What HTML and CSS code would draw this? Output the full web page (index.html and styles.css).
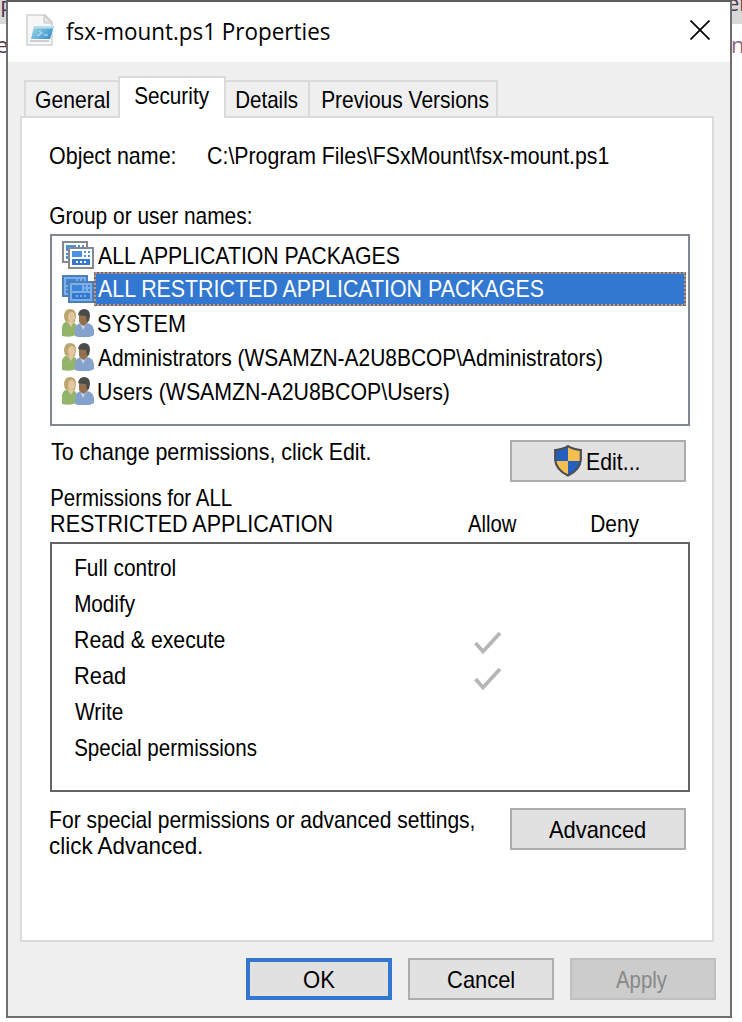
FILE: index.html
```html
<!DOCTYPE html>
<html lang="en">
<head>
<meta charset="utf-8">
<title>fsx-mount.ps1 Properties</title>
<link rel="stylesheet" href="styles.css">
</head>
<body>
<svg width="0" height="0" class="defs">
  <symbol id="pkg" viewBox="0 0 32 28" shape-rendering="crispEdges">
    <path class="pkg-frame" d="M1 1H25V21H1z" stroke-width="2"/>
    <path class="pkg-blue" d="M4 4H14V6H4zM16 4H18V6H16zM20 4H22V6H20zM4 6H6V10H4zM4 12H6V14H4zM4 15H6V18H4z"/>
    <path class="pkg-frame" d="M7 7H31V27H7z" stroke-width="2"/>
    <path class="pkg-blue" d="M10 10H20V16H10zM22 10H24V12H22zM26 10H28V12H26zM22 14H24V16H22zM26 14H28V16H26z"/>
    <path class="pkg-deep" d="M10 18H28V24H10z"/>
    <path class="pkg-dots" d="M14 20H16V22H14zM18 20H20V22H18zM22 20H24V22H22z"/>
  </symbol>
  <symbol id="users" viewBox="0 0 32 28">
    <path d="M0 27V18q1-5 6-6l5 1q4 2 4 6v6q-5 4-15 2z" fill="#93b46b"/>
    <path d="M2 8Q2 0 8 0t6 7l-1 6-4 1-6-2z" fill="#bba66f"/>
    <path d="M5 12l4 6 3-5z" fill="#e9c5a5"/>
    <ellipse cx="9.500" cy="8" rx="3.500" ry="5" fill="#e3c6a0"/>
    <path d="M13 27v-7q1-5 6-6h6q6 1 7 7v5q-9 5-19 1z" fill="#84a2cc"/>
    <path d="M18 14l3 7 4-8z" fill="#c7d6ec"/>
    <path d="M17 5h9v8l-4 4q-5-2-5-5z" fill="#95704f"/>
    <path d="M16 6q1-6 6-6 6 0 6 7l-1 5-2 1-1-6q-4 0-8-1z" fill="#4b4b49"/>
  </symbol>
  <symbol id="check" viewBox="0 0 28 24">
    <path d="M1.500 12L9 20.500L26 2" fill="none" stroke="#b6b6b6" stroke-width="3.800"/>
  </symbol>
</svg>
<div class="desktop">
  <div class="behind-strip"></div>
  <span class="peek peek-p">P</span><span class="peek peek-e">e</span>
  <span class="peek peek-er">er</span><span class="peek peek-n">n</span>
  <div class="window">
    <header class="titlebar">
      <svg class="file-icon" viewBox="0 0 28 32">
        <defs><linearGradient id="pane" x2="1" y2="0.6"><stop offset="0" stop-color="#a5dbea"/><stop offset="1" stop-color="#3b93c9"/></linearGradient></defs>
        <path d="M1 1H19L26 8V31H1z" fill="#f7f7f7" stroke="#d2d2d2" stroke-width="1.500"/>
        <path d="M18 1V9H26z" fill="#e2e2e2" stroke="#c4c4c4"/>
        <path d="M8 12H28L24 25H5z" fill="url(#pane)"/>
        <path d="M8 12H28L27.500 14.500H7.500z" fill="#b5dfec"/>
        <path d="M13 17l3 2-5 3M18 21h4" fill="none" stroke="#a5d7ee" stroke-width="1.500"/>
        <path d="M4 27H23" stroke="#cfcfcf" stroke-width="2"/>
      </svg>
      <span class="t title" data-w="264">fsx-mount.ps1 Properties</span>
      <svg class="close" viewBox="0 0 20 20"><path d="M0.500 0.500L19.500 19.500M19.500 0.500L0.500 19.500" stroke="#000" stroke-width="1.700"/></svg>
    </header>
    <nav class="tabs">
      <div class="tab tab-general"><span class="t" data-w="73">General</span></div>
      <div class="tab tab-active"><span class="t" data-w="74">Security</span></div>
      <div class="tab tab-details"><span class="t" data-w="62">Details</span></div>
      <div class="tab tab-versions"><span class="t" data-w="167">Previous Versions</span></div>
    </nav>
    <main class="panel">
      <div class="object">
        <span class="t" data-w="125">Object name:</span>
        <span class="t" data-w="401">C:\Program Files\FSxMount\fsx-mount.ps1</span>
      </div>
      <div class="group-label"><span class="t" data-w="201">Group or user names:</span></div>
      <ul class="groups">
        <li><svg class="icon"><use href="#pkg"/></svg><div class="name"><span class="t" data-w="303">ALL APPLICATION PACKAGES</span></div></li>
        <li class="selected"><svg class="icon"><use href="#pkg"/></svg><div class="name"><span class="t" data-w="447">ALL RESTRICTED APPLICATION PACKAGES</span><svg class="focus" width="592" height="34"><rect x="1" y="1" width="590" height="32" fill="none" stroke="#f08c3c" stroke-width="2" stroke-dasharray="2"/></svg></div></li>
        <li><svg class="icon"><use href="#users"/></svg><div class="name"><span class="t" data-w="87">SYSTEM</span></div></li>
        <li><svg class="icon"><use href="#users"/></svg><div class="name"><span class="t" data-w="504">Administrators (WSAMZN-A2U8BCOP\Administrators)</span></div></li>
        <li><svg class="icon"><use href="#users"/></svg><div class="name"><span class="t" data-w="351">Users (WSAMZN-A2U8BCOP\Users)</span></div></li>
      </ul>
      <div class="edit-row">
        <span class="t" data-w="319">To change permissions, click Edit.</span>
        <button class="btn wide edit">
          <svg class="shield" viewBox="0 0 28 32">
            <path d="M14 1L27 5V16Q26 25 14 31Q2 25 1 16V5z" fill="#245fbf"/>
            <path d="M14 2L26 6V16H14zM2 16H14V30Q4 25 2 16z" fill="#f5bf4f"/>
            <path d="M14 1.200Q19 4.500 26.800 5V15Q26 25 14 30.500Q2 25 1.200 15V5Q9 4.500 14 1.200z" fill="none" stroke="#4b4f52" stroke-width="2.200"/>
          </svg>
          <span class="t" data-w="52">Edit...</span>
        </button>
      </div>
      <div class="perm-head">
        <div class="perm-for"><span class="t" data-w="182">Permissions for ALL</span><span class="t" data-w="282">RESTRICTED APPLICATION</span></div>
        <span class="t allow" data-w="49">Allow</span>
        <span class="t" data-w="48">Deny</span>
      </div>
      <ul class="perms">
        <li><span class="t" data-w="100">Full control</span></li>
        <li><span class="t" data-w="60">Modify</span></li>
        <li><span class="t" data-w="150">Read &amp; execute</span><svg class="check"><use href="#check"/></svg></li>
        <li><span class="t" data-w="50">Read</span><svg class="check"><use href="#check"/></svg></li>
        <li><span class="t" data-w="48">Write</span></li>
        <li><span class="t" data-w="182">Special permissions</span></li>
      </ul>
      <div class="advanced-row">
        <div class="note"><span class="t" data-w="424">For special permissions or advanced settings,</span><span class="t" data-w="153">click Advanced.</span></div>
        <button class="btn wide advanced"><span class="t" data-w="96">Advanced</span></button>
      </div>
    </main>
    <footer class="actions">
      <button class="btn default"><span class="t" data-w="31">OK</span></button>
      <button class="btn"><span class="t" data-w="66">Cancel</span></button>
      <button class="btn disabled"><span class="t" data-w="51">Apply</span></button>
    </footer>
  </div>
</div>
<script src="fit.js"></script>
</body>
</html>
```
FILE: styles.css
```css
* { box-sizing: border-box; }
body { margin: 0; background: #fff; color: #000; font: 24px/26px "Liberation Sans", Arial, sans-serif; }
ul { list-style: none; margin: 0; padding: 0; }
.defs { position: absolute; }
.desktop { position: relative; width: 742px; height: 1022px; padding: 0 10px 4px 6px; overflow: hidden; background: #fff; }
.behind-strip { position: absolute; left: 0; top: 0; width: 742px; height: 24px; background: #d9d9d9; }
.peek { position: absolute; color: #54364c; font-family: "Open Sans", sans-serif; font-size: 22px; }
.peek-p { left: 0; top: -5px; }
.peek-e { left: -4px; top: 31px; }
.peek-er { left: 727px; top: -11px; }
.peek-n { left: 731px; top: 31px; color: #93647f; }
.window { position: relative; width: 726px; height: 1018px; border: 2px solid #6d6e70; border-top-color: #5d5c5c; background: #efefef; }
.t { display: block; flex: none; white-space: nowrap; transform-origin: 0 50%; }
.titlebar { display: flex; height: 60px; padding-left: 18px; background: #fff; }
.file-icon { width: 28px; height: 32px; margin-top: 12px; }
.title { margin: 13px 0 0 12px; font: 24px/32px "Open Sans", "Noto Sans", sans-serif; }
.close { width: 20px; height: 20px; margin: 18px 0 0 360px; }
.tabs { position: relative; z-index: 1; display: flex; height: 56px; padding: 14px 0 0 16px; align-items: flex-end; }
.tab { height: 38px; padding-top: 5px; border: 2px solid #dadada; border-left-width: 0; display: flex; justify-content: center; }
.tab-general { width: 94px; border-left-width: 2px; border-right: 0; padding-left: 1px; }
.tab-active { width: 108px; height: 42px; border-left-width: 2px; border-bottom: 0; background: #fff; }
.tab-details { width: 84px; }
.tab-versions { width: 188px; padding-left: 5px; }
.panel { width: 694px; height: 826px; margin: -2px 0 0 12px; padding: 0 22px 0 28px; border: 2px solid #dadada; background: #fff; }
.object { display: flex; gap: 33px; height: 60px; padding-top: 25px; }
.group-label { height: 56px; padding-top: 25px; }
.groups { width: 640px; height: 192px; padding: 2px 2px 0 10px; border: 2px solid #828790; }
.groups li { display: flex; height: 34px; align-items: center; }
.icon { width: 32px; height: 28px; }
.pkg-frame { fill: var(--paper, #fff); stroke: var(--frame, #85898d); }
.pkg-blue { fill: var(--blue, #4a91e2); }
.pkg-deep { fill: var(--deep, #3478d0); }
.pkg-dots { fill: var(--paper, #fff); }
.selected { --paper: #7db0e6; --frame: #4c7fb8; --blue: #3f84db; --deep: #3478d0; }
.name { position: relative; display: flex; width: 592px; height: 34px; padding: 5px 4px 3px; }
.selected .name { padding-top: 4px; background: #3277d0; color: #fff; }
.focus { position: absolute; left: 0; top: 0; shape-rendering: crispEdges; }
.edit-row { display: flex; justify-content: space-between; height: 58px; padding: 14px 4px 0 1px; }
.edit-row > .t { margin-top: -1px; }
.btn { display: flex; align-items: center; justify-content: center; width: 146px; height: 42px; margin: 0; padding: 2px 0 0; border: 2px solid #adadad; border-radius: 0; background: #e1e1e1; color: #000; font: inherit; }
.wide { width: 176px; }
.advanced { padding-right: 3px; }
.default { border: 4px solid #3277d0; }
.disabled { padding-right: 3px; border-color: #bfbfbf; background: #ccc; color: #888; }
.edit { gap: 5px; padding-right: 4px; }
.shield { width: 28px; height: 32px; margin-top: -2px; }
.perm-head { display: flex; height: 58px; padding: 1px 0 5px 1px; align-items: flex-end; }
.perm-for { width: 417px; }
.allow { margin-right: 74px; }
.perms { width: 640px; height: 250px; padding: 6px 0 0 23px; border: 2px solid #646464; }
.perms li { position: relative; display: flex; height: 36px; align-items: center; }
.check { position: absolute; left: 399px; top: 9px; width: 28px; height: 24px; }
.advanced-row { display: flex; justify-content: space-between; padding: 16px 4px 0 0; }
.note { margin-top: -1px; }
.actions { display: flex; justify-content: flex-end; gap: 16px; padding: 16px 14px 0 0; }
```
FILE: fit.js
```js
// Condenses each label so that its inked width equals its data-w value.
const ctx = document.createElement('canvas').getContext('2d');
document.querySelectorAll('.t').forEach(el => {
  const style = getComputedStyle(el);
  ctx.font = style.fontSize + ' ' + style.fontFamily;
  const m = ctx.measureText(el.textContent);
  const ink = m.actualBoundingBoxRight + m.actualBoundingBoxLeft;
  const scale = el.dataset.w / ink;
  el.style.width = el.dataset.w + 'px';
  el.style.transform = `scaleX(${scale}) translateX(${m.actualBoundingBoxLeft}px)`;
});
```
